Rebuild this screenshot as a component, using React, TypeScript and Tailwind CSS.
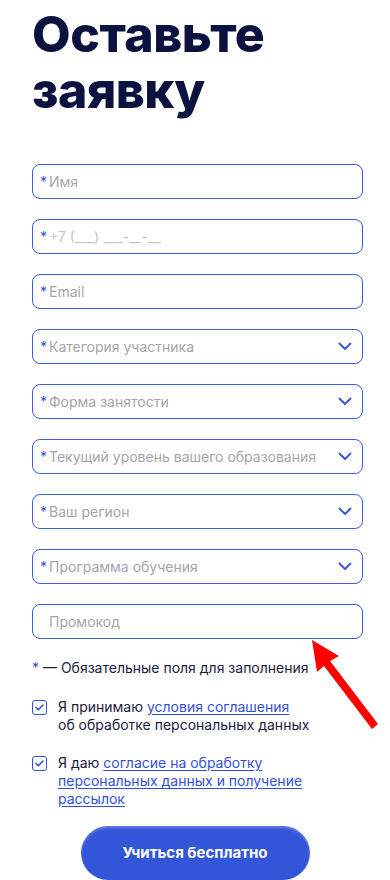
import * as React from "react";

const fields = [
  { label: "Имя", required: true },
  { label: "+7 (___) ___-__-__", required: true, light: true },
  { label: "Email", required: true },
  { label: "Категория участника", required: true, select: true },
  { label: "Форма занятости", required: true, select: true },
  { label: "Текущий уровень вашего образования", required: true, select: true },
  { label: "Ваш регион", required: true, select: true },
  { label: "Программа обучения", required: true, select: true },
  { label: "Промокод", required: false },
];

function Chevron() {
  return (
    <svg width="14" height="9" viewBox="0 0 14 9" fill="none" className="shrink-0">
      <path d="M1.5 1.5L7 7L12.5 1.5" stroke="#3352d8" strokeWidth="1.8" strokeLinecap="round" strokeLinejoin="round" />
    </svg>
  );
}

function Check() {
  return (
    <span className="mt-[2px] flex size-[15px] shrink-0 items-center justify-center rounded-[3px] border-[1.5px] border-[#3352d8]">
      <svg width="9" height="7" viewBox="0 0 9 7" fill="none">
        <path d="M1 3.5L3.4 5.8L8 1" stroke="#3352d8" strokeWidth="1.6" strokeLinecap="round" strokeLinejoin="round" />
      </svg>
    </span>
  );
}

export default function App() {
  return (
    <div className="relative h-[880px] w-[390px] overflow-hidden bg-white px-[32px] pt-[6px] font-['Inter',sans-serif] text-[#0d1340]">
      <h1 className="text-[50px] leading-[56px] font-extrabold tracking-[-0.5px] text-[#0b1240]">
        Оставьте
        <br />
        заявку
      </h1>

      <div className="mt-[46px] flex w-[331px] flex-col gap-[20px]">
        {fields.map((f) => (
          <div
            key={f.label}
            className="flex h-[35px] items-center rounded-[8px] border border-[#3d5ce8] pr-[10px] pl-[7px] text-[14px]"
          >
            {f.required ? (
              <span className="mr-[2px] text-[#3352d8]">*</span>
            ) : (
              <span className="w-[9px]" />
            )}
            <span className={f.light ? "flex-1 text-[#c4c4c8]" : "flex-1 text-[#a5a5aa]"}>{f.label}</span>
            {f.select && <Chevron />}
          </div>
        ))}
      </div>

      <p className="mt-[20px] text-[14px] leading-[18px] text-[#1b2140]">
        <span className="text-[#3352d8]">*</span> — Обязательные поля для заполнения
      </p>

      <div className="mt-[21px] flex gap-[11px] text-[14px] leading-[18px] text-[#1b2140]">
        <Check />
        <p>
          Я принимаю <a className="text-[#3352d8] underline underline-offset-2">условия соглашения</a>
          <br />
          об обработке персональных данных
        </p>
      </div>

      <div className="mt-[20px] flex gap-[11px] text-[14px] leading-[18px] text-[#1b2140]">
        <Check />
        <p className="w-[260px]">
          Я даю{" "}
          <a className="text-[#3352d8] underline underline-offset-2">
            согласие на обработку персональных данных и получение рассылок
          </a>
        </p>
      </div>

      <div className="mt-[18px] flex justify-center">
        <button className="h-[54px] w-[229px] rounded-full bg-[#3355d8] text-[15px] font-bold text-white shadow-[inset_0_2px_3px_rgba(255,255,255,0.25)]">
          Учиться бесплатно
        </button>
      </div>

      <svg className="absolute top-[636px] left-[306px]" width="80" height="96" viewBox="0 0 80 96" fill="none">
        <path d="M6 4L33 20L24 25L72 88L66 93L18 30L11 36Z" fill="#ff0000" />
      </svg>
    </div>
  );
}
